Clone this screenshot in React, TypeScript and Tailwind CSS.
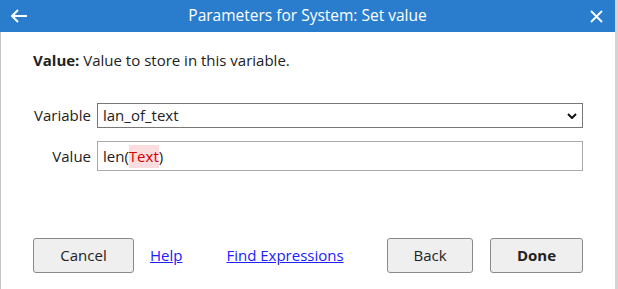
import React from "react";

export default function App() {
    return (
        <div className="w-[618px] h-[289px] flex bg-[#d4d4d4] overflow-hidden" style={{ fontFamily: '"Open Sans", "Noto Sans", sans-serif' }}>
            <div className="w-[615px] flex flex-col bg-white">
                {/* Title bar */}
                <div className="h-[32px] bg-[#2a7dcd] flex items-center justify-between text-white shrink-0">
                    <button className="w-[38px] h-[32px] flex items-center justify-center">
                        <svg width="18" height="14" viewBox="0 0 18 14" fill="none" stroke="white" strokeWidth="2" className="ml-[-1px]">
                            <path d="M17 7H2M8 1L2 7l6 6" />
                        </svg>
                    </button>
                    <div className="text-[15.5px] leading-none">Parameters for System: Set value</div>
                    <button className="w-[38px] h-[32px] flex items-center justify-center">
                        <svg width="13" height="13" viewBox="0 0 13 13" stroke="white" strokeWidth="1.8">
                            <path d="M1 1l11 11M12 1L1 12" />
                        </svg>
                    </button>
                </div>

                {/* Body */}
                <div className="flex-1 flex flex-col border-l border-[#c4c4c4] pl-[32px] pr-[32px] text-[#222] text-[15px]">
                    <p className="mt-[18px] leading-[20px]">
                        <span className="font-bold">Value:</span> Value to store in this variable.
                    </p>

                    <div className="mt-[33px] flex items-center gap-[6px]">
                        <label className="w-[58px] text-right">Variable</label>
                        <div className="flex-1 h-[25px] border border-[#777] flex items-center justify-between pl-[5px] pr-[5px]">
                            <span>lan_of_text</span>
                            <svg width="10" height="6" viewBox="0 0 10 6" fill="none" stroke="#111" strokeWidth="2">
                                <path d="M1 1l4 4 4-4" />
                            </svg>
                        </div>
                    </div>

                    <div className="mt-[13px] flex items-center gap-[6px]">
                        <label className="w-[58px] text-right">Value</label>
                        <div className="flex-1 h-[30px] border border-[#aaa] flex items-center pl-[5px]">
                            <span>len(</span>
                            <span className="bg-[#fbdcdf] text-[#d40000] leading-[23px]">Text</span>
                            <span>)</span>
                        </div>
                    </div>

                    {/* Footer */}
                    <div className="mt-[67px] flex items-center">
                        <button className="w-[101px] h-[35px] bg-[#efefef] border border-[#8a8a8a] rounded-[3px]">Cancel</button>
                        <a href="#" className="ml-[16px] text-[#2020ff] underline">Help</a>
                        <a href="#" className="ml-[44px] text-[#2020ff] underline">Find Expressions</a>
                        <button className="ml-auto w-[86px] h-[35px] bg-[#efefef] border border-[#8a8a8a] rounded-[3px]">Back</button>
                        <button className="ml-[17px] w-[93px] h-[35px] bg-[#efefef] border border-[#8a8a8a] rounded-[3px] font-bold">Done</button>
                    </div>
                </div>
            </div>
        </div>
    );
}
